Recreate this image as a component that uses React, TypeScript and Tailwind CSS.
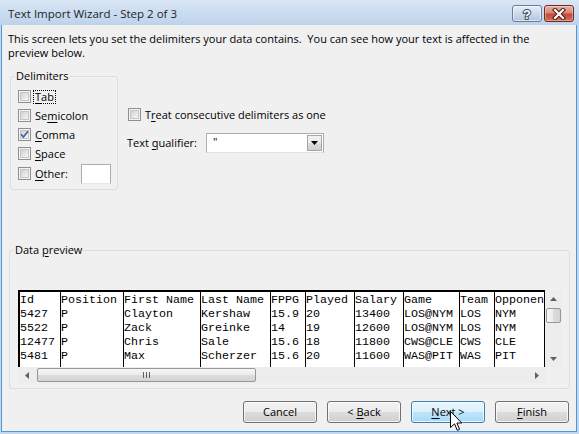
import React from 'react';

// underline one character (access key)
const U = ({ t, i }: { t: string; i: number }) => (
  <>
    {t.slice(0, i)}
    <span className="underline underline-offset-[2px]">{t[i]}</span>
    {t.slice(i + 1)}
  </>
);

const CheckBox = ({ checked = false }: { checked?: boolean }) => (
  <span className="relative flex h-[13px] w-[13px] flex-none items-center justify-center border border-[#8e8f8f] bg-[#f4f4f4]">
    <span className="h-[9px] w-[9px] border border-[#c2c5c9] bg-gradient-to-br from-[#cdd0d5] to-[#f7f7f7]" />
    {checked && (
      <svg className="absolute left-0 top-0" width="11" height="11" viewBox="0 0 11 11">
        <path d="M2 5.3 L4.4 8 L9 2.2" fill="none" stroke="#4a5f97" strokeWidth="1.7" />
      </svg>
    )}
  </span>
);

interface OptionProps {
  label: string;
  u: number;
  checked?: boolean;
  focus?: boolean;
  className?: string;
}

const Option = ({ label, u, checked, focus, className = '' }: OptionProps) => (
  <div className={`flex items-center gap-[2px] ${className}`}>
    <CheckBox checked={checked} />
    <span
      className={`border px-[1px] leading-[12px] ${
        focus ? 'border-dotted border-black' : 'border-transparent'
      }`}
    >
      <U t={label} i={u} />
    </span>
  </div>
);

const Arrow = ({ dir }: { dir: 'up' | 'down' | 'left' | 'right' }) => {
  const d = {
    up: 'M0 4 L3.5 0 L7 4 Z',
    down: 'M0 0 L7 0 L3.5 4 Z',
    left: 'M4 0 L4 7 L0 3.5 Z',
    right: 'M0 0 L4 3.5 L0 7 Z',
  }[dir];
  const horiz = dir === 'left' || dir === 'right';
  return (
    <svg width={horiz ? 4 : 7} height={horiz ? 7 : 4} viewBox={horiz ? '0 0 4 7' : '0 0 7 4'}>
      <path d={d} fill="#606060" />
    </svg>
  );
};

const Button = ({ children, active = false }: { children: React.ReactNode; active?: boolean }) => (
  <div
    className={`flex h-[22px] w-[74px] items-center justify-center rounded-[3px] border shadow-[inset_0_0_0_1px_rgba(255,255,255,0.75)] ${
      active
        ? 'border-[#3c7fb1] bg-[linear-gradient(#eaf6fd,#d9f0fc_50%,#bee6fd_50%,#a7d9f5)]'
        : 'border-[#707070] bg-[linear-gradient(#f2f2f2,#ebebeb_50%,#dddddd_50%,#cfcfcf)]'
    }`}
  >
    <span className="whitespace-pre">{children}</span>
  </div>
);

const columns = [
  { w: 'w-[40px]', sep: false, cells: ['Id', '5427', '5522', '12477', '5481'] },
  { w: 'w-[63px]', sep: true, cells: ['Position', 'P', 'P', 'P', 'P'] },
  { w: 'w-[77px]', sep: true, cells: ['First Name', 'Clayton', 'Zack', 'Chris', 'Max'] },
  { w: 'w-[70px]', sep: true, cells: ['Last Name', 'Kershaw', 'Greinke', 'Sale', 'Scherzer'] },
  { w: 'w-[35px]', sep: true, cells: ['FPPG', '15.9', '14', '15.6', '15.6'] },
  { w: 'w-[49px]', sep: true, cells: ['Played', '20', '19', '18', '20'] },
  { w: 'w-[49px]', sep: true, cells: ['Salary', '13400', '12600', '11800', '11600'] },
  { w: 'w-[56px]', sep: true, cells: ['Game', 'LOS@NYM', 'LOS@NYM', 'CWS@CLE', 'WAS@PIT'] },
  { w: 'w-[35px]', sep: true, cells: ['Team', 'LOS', 'LOS', 'CWS', 'WAS'] },
  { w: 'min-w-0 flex-1', sep: true, cells: ['Opponen', 'NYM', 'NYM', 'CLE', 'PIT'] },
];

export default function App() {
  return (
    <div className="relative flex h-[434px] w-[579px] flex-col overflow-hidden bg-[#c3d7ee] font-['Open_Sans',sans-serif] text-[11px] text-black">
      {/* Title bar */}
      <div className="flex h-[25px] flex-none items-start bg-gradient-to-b from-[#d9e6f4] to-[#bdd3eb] pr-[5px]">
        <span className="pl-[8px] pt-[5px] text-[11.5px] leading-[18px] text-[#1e1e1e]">
          Text Import Wizard - Step 2 of 3
        </span>
        <div className="ml-auto mt-[5px] flex gap-[2px]">
          <div className="flex h-[17px] w-[30px] items-center justify-center rounded-[3px] border border-[#687d9c] bg-gradient-to-b from-[#e6eef8] to-[#b3c6dd] shadow-[inset_0_0_0_1px_rgba(255,255,255,0.55)]">
            <svg width="14" height="15" viewBox="0 0 14 15">
              <text
                x="7"
                y="12.5"
                textAnchor="middle"
                fontFamily="Liberation Sans, sans-serif"
                fontWeight="bold"
                fontSize="13"
                fill="#ffffff"
                stroke="#3d4c66"
                strokeWidth="2"
                paintOrder="stroke"
              >
                ?
              </text>
            </svg>
          </div>
          <div className="flex h-[17px] w-[30px] items-center justify-center rounded-[3px] border border-[#6c2a22] bg-[linear-gradient(#eab0a4,#d98471_45%,#c4483a_55%,#d2705a)] shadow-[inset_0_0_0_1px_rgba(255,255,255,0.35)]">
            <svg width="14" height="12" viewBox="0 0 14 12">
              <path d="M3 2 L11 10 M11 2 L3 10" stroke="#4b1812" strokeWidth="4.2" strokeLinecap="square" />
              <path d="M3 2 L11 10 M11 2 L3 10" stroke="#ffffff" strokeWidth="2.2" strokeLinecap="square" />
            </svg>
          </div>
        </div>
      </div>

      {/* Client area */}
      <div className="ml-[1px] mr-[2px] flex h-[407px] flex-col border-x border-b border-[#4c9ad9] bg-[#f0f0f0]">
        <p className="pl-[6px] pt-[7px] leading-[14px]">
          This screen lets you set the delimiters your data contains.&nbsp; You can see how your text is affected in the
          <br />
          preview below.
        </p>

        <div className="mt-[16px] flex">
          {/* Delimiters group */}
          <div className="relative ml-[8px] h-[114px] w-[108px] rounded-[3px] border border-[#d5dfe5] pl-[7px] pr-[6px] pt-[10px]">
            <span className="absolute -top-[8px] left-[4px] bg-[#f0f0f0] px-[1px] leading-[14px]">Delimiters</span>
            <Option label="Tab" u={0} focus className="h-[19px]" />
            <Option label="Semicolon" u={2} className="h-[19px]" />
            <Option label="Comma" u={0} checked className="h-[19px]" />
            <Option label="Space" u={0} className="h-[19px]" />
            <div className="flex h-[21px] items-center">
              <Option label="Other:" u={0} />
              <div className="ml-auto h-[20px] w-[30px] border border-[#abadb3] border-b-[#e3e9ef] bg-white" />
            </div>
          </div>

          {/* Right options */}
          <div className="ml-[10px] flex flex-col">
            <Option label="Treat consecutive delimiters as one" u={1} className="mt-[32px] h-[13px]" />
            <div className="-ml-[1px] mt-[12px] flex h-[20px] items-center">
              <span className="w-[79px] leading-[14px]">
                <U t="Text qualifier:" i={5} />
              </span>
              <div className="flex h-[20px] w-[118px] items-start border border-[#abadb3] border-b-[#dfe3e9] bg-white">
                <span className="pl-[6px] pt-[1px] leading-[14px]">"</span>
                <div className="ml-auto mr-[1px] mt-[1px] flex h-[16px] w-[15px] items-center justify-center border border-[#a6a6a6] bg-[linear-gradient(#f2f2f2,#ebebeb_50%,#dddddd_50%,#cfcfcf)]">
                  <svg width="7" height="4" viewBox="0 0 7 4">
                    <path d="M0 0 L7 0 L3.5 4 Z" fill="#000" />
                  </svg>
                </div>
              </div>
            </div>
          </div>
        </div>

        {/* Data preview group */}
        <div className="relative ml-[7px] mt-[60px] h-[139px] w-[561px] rounded-[3px] border border-[#d5dfe5] pl-[8px] pt-[39px]">
          <span className="absolute -top-[8px] left-[4px] bg-[#f0f0f0] px-[1px] leading-[14px]">
            <U t="Data preview" i={5} />
          </span>

          <div className="flex w-[544px] flex-col">
            <div className="flex h-[77px]">
              <div className="flex w-[527px] overflow-hidden border-l-2 border-r border-t-2 border-black bg-white font-['Liberation_Mono','Courier_New',monospace] text-[11.67px] leading-[14px]">
                {columns.map((col) => (
                  <div
                    key={col.cells[0]}
                    className={`${col.w} h-full flex-none overflow-hidden whitespace-pre pt-[1px] ${
                      col.sep ? 'border-l border-black' : ''
                    }`}
                  >
                    {col.cells.map((c, i) => (
                      <div key={i} className="h-[14px]">
                        {c}
                      </div>
                    ))}
                  </div>
                ))}
              </div>

              {/* vertical scrollbar */}
              <div className="flex w-[17px] flex-col bg-[#ededed]">
                <div className="flex h-[17px] items-center justify-center">
                  <Arrow dir="up" />
                </div>
                <div className="mx-[1px] mt-[1px] h-[15px] rounded-[2px] border border-[#979797] bg-[linear-gradient(90deg,#f5f5f5,#ececec_50%,#dcdcdc_50%,#d4d4d4)]" />
                <div className="flex-1" />
                <div className="flex h-[17px] items-center justify-center">
                  <Arrow dir="down" />
                </div>
              </div>
            </div>

            <div className="flex h-[16px]">
              {/* horizontal scrollbar */}
              <div className="flex w-[527px] items-center bg-[#ededed]">
                <div className="flex h-full w-[17px] items-center justify-center">
                  <Arrow dir="left" />
                </div>
                <div className="ml-[2px] flex h-[14px] w-[219px] items-center justify-center gap-[2px] rounded-[2px] border border-[#979797] bg-[linear-gradient(#f5f5f5,#ececec_50%,#dcdcdc_50%,#d4d4d4)]">
                  <span className="h-[6px] w-[1px] bg-[#5e5e5e]" />
                  <span className="h-[6px] w-[1px] bg-[#5e5e5e]" />
                  <span className="h-[6px] w-[1px] bg-[#5e5e5e]" />
                </div>
                <div className="flex-1" />
                <div className="flex h-full w-[17px] items-center justify-center">
                  <Arrow dir="right" />
                </div>
              </div>
              <div className="w-[17px] bg-[#f0f0f0]" />
            </div>
          </div>
        </div>

        {/* Buttons */}
        <div className="mt-[12px] flex justify-end gap-[10px] pr-[7px]">
          <Button>Cancel</Button>
          <Button>
            {'< '}
            <U t="Back" i={0} />
          </Button>
          <Button active>
            <U t="Next" i={0} />
            {' >'}
          </Button>
          <Button>
            <U t="Finish" i={0} />
          </Button>
        </div>
      </div>

      {/* mouse pointer */}
      <svg className="absolute left-[450px] top-[411px]" width="13" height="21" viewBox="0 0 13 21">
        <path
          d="M0.5 0.5 L0.5 16.5 L4.5 12.8 L7.3 19.3 L9.6 18.3 L6.9 12 L11.8 12 Z"
          fill="#ffffff"
          stroke="#000000"
          strokeWidth="1"
          strokeLinejoin="miter"
        />
      </svg>
    </div>
  );
}
